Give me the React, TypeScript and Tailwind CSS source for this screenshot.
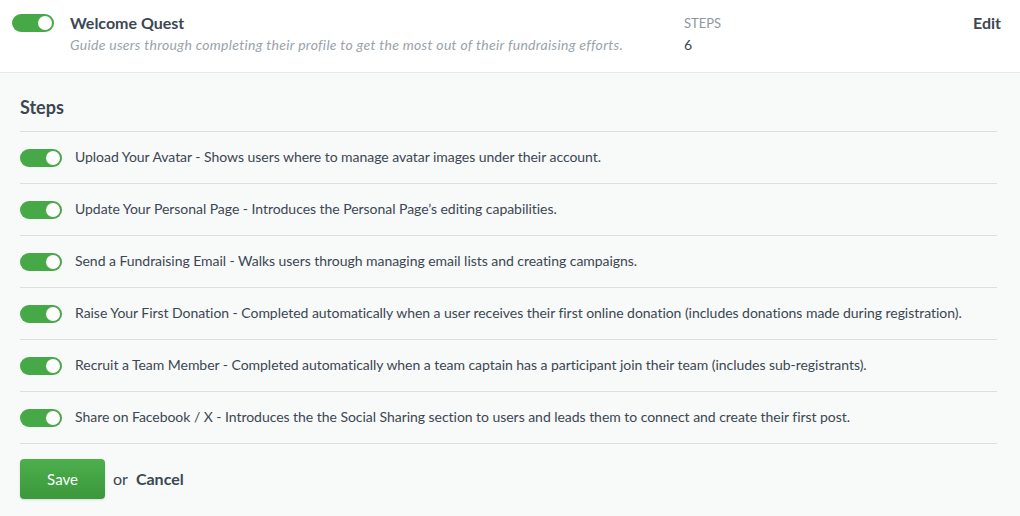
import React, { useState } from "react";

const steps = [
  "Upload Your Avatar - Shows users where to manage avatar images under their account.",
  "Update Your Personal Page - Introduces the Personal Page\u2019s editing capabilities.",
  "Send a Fundraising Email - Walks users through managing email lists and creating campaigns.",
  "Raise Your First Donation - Completed automatically when a user receives their first online donation (includes donations made during registration).",
  "Recruit a Team Member - Completed automatically when a team captain has a participant join their team (includes sub-registrants).",
  "Share on Facebook / X - Introduces the the Social Sharing section to users and leads them to connect and create their first post.",
];

const Toggle: React.FC<{ on: boolean; onClick: () => void }> = ({ on, onClick }) => (
  <button
    onClick={onClick}
    className={`relative w-[42px] h-[18px] rounded-full shrink-0 ${on ? "bg-[#46a846]" : "bg-gray-300"}`}
  >
    <span
      className={`absolute top-[2px] w-[14px] h-[14px] rounded-full bg-white ${on ? "left-[26px]" : "left-[2px]"}`}
    />
  </button>
);

export default function App() {
  const [quest, setQuest] = useState(true);
  const [enabled, setEnabled] = useState(steps.map(() => true));

  return (
    <div className="w-[1020px] h-[516px] bg-[#f8f9f9] text-[#3b4752] font-['Lato',sans-serif] overflow-hidden">
      {/* header */}
      <div className="h-[73px] bg-white border-b border-[#e6e9ea] flex pl-3 pr-[19px] pt-[14px]">
        <Toggle on={quest} onClick={() => setQuest(!quest)} />
        <div className="ml-4 flex-1">
          <div className="text-[16px] font-bold leading-[18px]">Welcome Quest</div>
          <div className="text-[14px] italic tracking-[0.3px] text-[#9aa3aa] mt-[4px] leading-[18px]">
            Guide users through completing their profile to get the most out of their fundraising efforts.
          </div>
        </div>
        <div className="w-[289px] pt-[1px]">
          <div className="text-[13px] uppercase text-[#8e979e] leading-[16px]">Steps</div>
          <div className="text-[14px] mt-[6px] leading-[16px]">6</div>
        </div>
        <div className="text-[16px] font-bold leading-[18px]">Edit</div>
      </div>

      {/* steps */}
      <div className="px-5 pr-[23px]">
        <div className="text-[18px] font-bold pt-[24px] pb-[14px] leading-[20px]">Steps</div>
        <div className="border-t border-[#dcdfe1]">
          {steps.map((s, i) => (
            <div key={i} className="h-[52px] flex items-center border-b border-[#dcdfe1]">
              <Toggle
                on={enabled[i]}
                onClick={() => setEnabled(enabled.map((v, j) => (j === i ? !v : v)))}
              />
              <span className="ml-[13px] mb-[2px] text-[14px] tracking-[-0.04px]">{s}</span>
            </div>
          ))}
        </div>
        <div className="flex items-center mt-[15px]">
          <button className="w-[85px] h-[40px] rounded bg-gradient-to-b from-[#4caf4c] to-[#3b983b] text-white text-[15px] shadow-sm">
            Save
          </button>
          <span className="ml-2 text-[16px]">or</span>
          <button className="ml-2 text-[16px] font-bold">Cancel</button>
        </div>
      </div>
    </div>
  );
}
